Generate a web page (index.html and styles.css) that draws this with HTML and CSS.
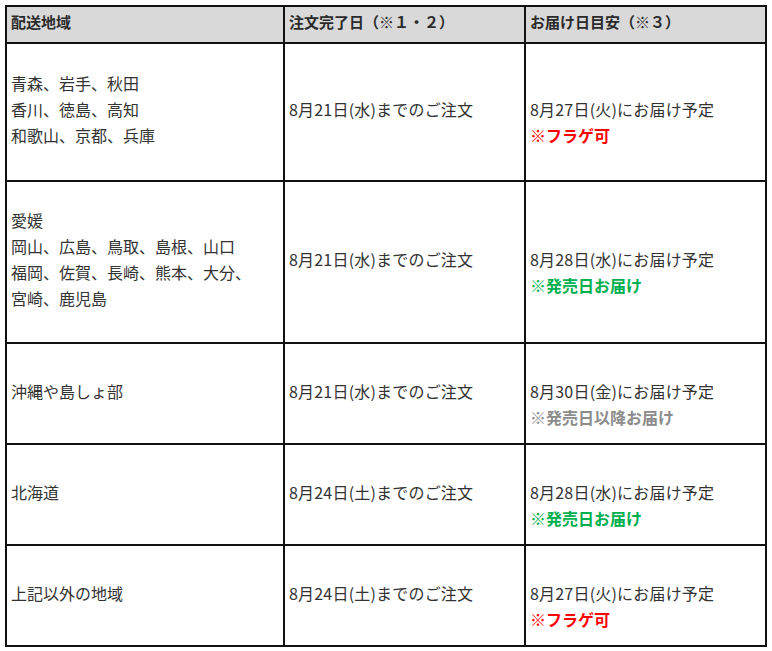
FILE: index.html
```html
<!DOCTYPE html>
<html lang="ja">
<head>
<meta charset="utf-8">
<title>お届け日目安</title>
<link rel="stylesheet" href="styles.css">
</head>
<body>
<table class="ship">
  <colgroup>
    <col class="c-area">
    <col class="c-order">
    <col class="c-deliv">
  </colgroup>
  <thead>
    <tr class="r-head">
      <th>配送地域</th>
      <th>注文完了日（※１・２）</th>
      <th>お届け日目安（※３）</th>
    </tr>
  </thead>
  <tbody>
    <tr class="r-1">
      <td>青森、岩手、秋田<br>香川、徳島、高知<br>和歌山、京都、兵庫</td>
      <td class="order">8月21日(水)までのご注文</td>
      <td class="deliv">8月27日(火)にお届け予定<br><span class="note red">※フラゲ可</span></td>
    </tr>
    <tr class="r-2">
      <td>愛媛<br>岡山、広島、鳥取、島根、山口<br>福岡、佐賀、長崎、熊本、大分、<br>宮崎、鹿児島</td>
      <td class="order">8月21日(水)までのご注文</td>
      <td class="deliv">8月28日(水)にお届け予定<br><span class="note green">※発売日お届け</span></td>
    </tr>
    <tr class="r-3">
      <td>沖縄や島しょ部</td>
      <td class="order">8月21日(水)までのご注文</td>
      <td class="deliv">8月30日(金)にお届け予定<br><span class="note gray">※発売日以降お届け</span></td>
    </tr>
    <tr class="r-3">
      <td>北海道</td>
      <td class="order">8月24日(土)までのご注文</td>
      <td class="deliv">8月28日(水)にお届け予定<br><span class="note green">※発売日お届け</span></td>
    </tr>
    <tr class="r-3">
      <td>上記以外の地域</td>
      <td class="order">8月24日(土)までのご注文</td>
      <td class="deliv">8月27日(火)にお届け予定<br><span class="note red">※フラゲ可</span></td>
    </tr>
  </tbody>
</table>
</body>
</html>
```

FILE: styles.css
```css
html, body {
  margin: 0;
  padding: 0;
  background: #ffffff;
}

body {
  font-family: "Noto Sans CJK JP", "Noto Sans", sans-serif;
  color: #333333;
  font-size: 16px;
  line-height: 26px;
}

.ship {
  margin: 5px 0 0 5px;
  border-collapse: collapse;
  table-layout: fixed;
  width: 762px;
}

.c-area { width: 278px; }
.c-order { width: 241px; }
.c-deliv { width: 241px; }

.ship th,
.ship td {
  border: 2px solid #111111;
  padding: 0 4px 6px;
  text-align: left;
  vertical-align: middle;
  white-space: nowrap;
}

.ship th {
  background: #d9d9d9;
  font-size: 15px;
  font-weight: bold;
  color: #2b2b2b;
}

.ship td.order,
.ship td.deliv {
  letter-spacing: 0.2px;
}

.r-head { height: 37px; }
.r-1 { height: 138px; }
.r-2 { height: 162px; }
.r-3 { height: 101px; }

.ship td.deliv {
  padding-top: 26px;
}

.note {
  font-weight: bold;
  letter-spacing: 0;
}

.red { color: #ff0000; }
.green { color: #00b050; }
.gray { color: #8c8c8c; }
```
